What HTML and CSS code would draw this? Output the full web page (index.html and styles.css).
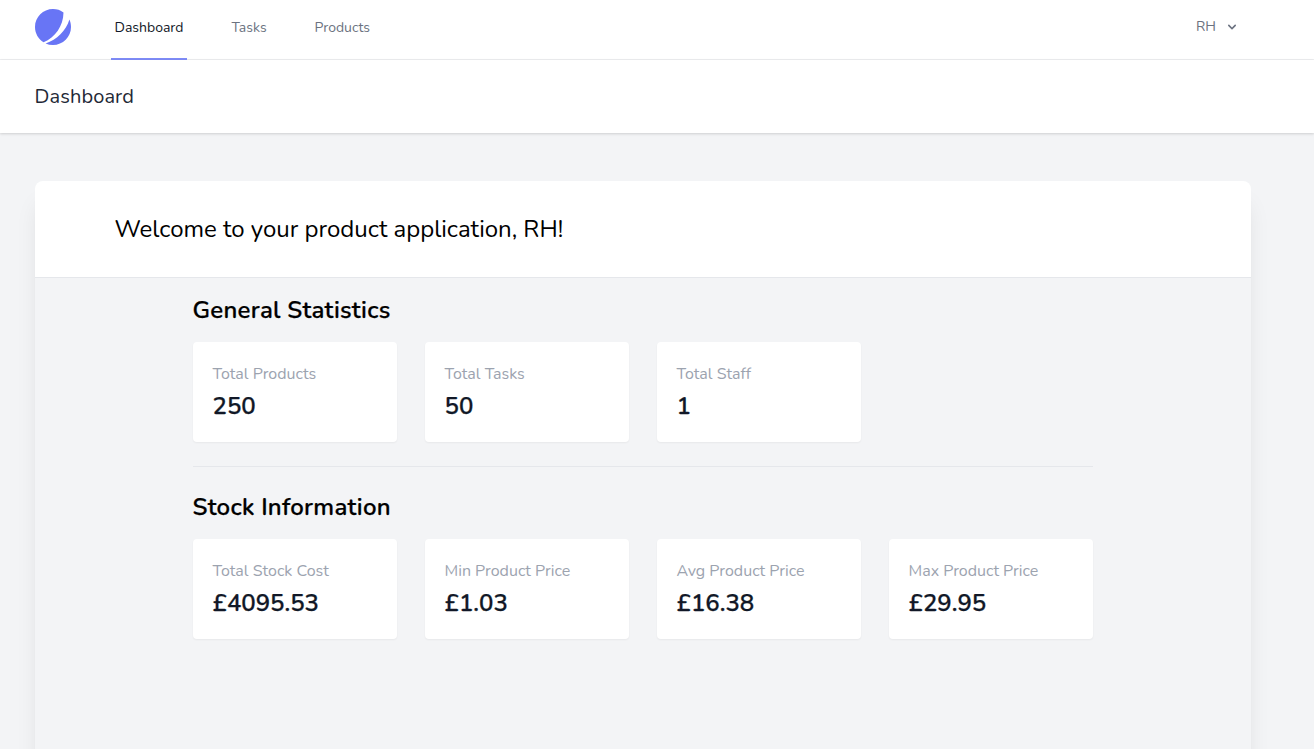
FILE: index.html
```html
<!DOCTYPE html>
<html lang="en">
<head>
<meta charset="utf-8">
<title>Dashboard</title>
<link rel="stylesheet" href="styles.css">
</head>
<body>
<nav class="nav">
  <svg class="logo" viewBox="0 0 48 48" fill="#6875f5" aria-hidden="true">
    <path d="M11.395 44.428C4.557 40.198 0 32.632 0 24 0 10.745 10.745 0 24 0a23.891 23.891 0 0113.997 4.502c-.2 17.907-11.097 33.245-26.602 39.926z"/>
    <path d="M14.134 45.885A23.914 23.914 0 0024 48c13.255 0 24-10.745 24-24 0-3.516-.756-6.856-2.115-9.866-4.659 15.143-16.608 27.092-31.75 31.751z"/>
  </svg>
  <div class="links">
    <a class="link active">Dashboard</a>
    <a class="link tasks">Tasks</a>
    <a class="link products">Products</a>
  </div>
  <div class="user"><span>RH</span>
    <svg class="chevron" viewBox="0 0 20 20" fill="#6b7280"><path fill-rule="evenodd" clip-rule="evenodd" d="M5.293 7.293a1 1 0 011.414 0L10 10.586l3.293-3.293a1 1 0 111.414 1.414l-4 4a1 1 0 01-1.414 0l-4-4a1 1 0 010-1.414z"/></svg>
  </div>
</nav>
<header class="header"><h1 class="title">Dashboard</h1></header>
<main class="main">
  <div class="panel">
    <div class="welcome"><span>Welcome to your product application, RH!</span></div>
    <div class="stats">
      <h2 class="heading">General Statistics</h2>
      <div class="cards">
        <div class="card"><div class="label">Total Products</div><div class="value">250</div></div>
        <div class="card"><div class="label">Total Tasks</div><div class="value">50</div></div>
        <div class="card"><div class="label">Total Staff</div><div class="value">1</div></div>
      </div>
      <div class="divider"></div>
      <h2 class="heading">Stock Information</h2>
      <div class="cards">
        <div class="card"><div class="label">Total Stock Cost</div><div class="value">£4095.53</div></div>
        <div class="card"><div class="label">Min Product Price</div><div class="value">£1.03</div></div>
        <div class="card"><div class="label">Avg Product Price</div><div class="value">£16.38</div></div>
        <div class="card"><div class="label">Max Product Price</div><div class="value">£29.95</div></div>
      </div>
    </div>
  </div>
</main>
</body>
</html>
```

FILE: styles.css
```css
* { box-sizing: border-box; }
body {
  margin: 0;
  height: 100vh;
  overflow: hidden;
  display: flex;
  flex-direction: column;
  background: #f3f4f6;
  color: #000;
  font-family: Nunito, Lato, sans-serif;
  white-space: nowrap;
}
h1, h2 { margin: 0; }
.nav {
  display: flex;
  flex: none;
  height: 60px;
  padding: 0 74px 0 35px;
  background: #fff;
  border-bottom: 1px solid #edeef0;
}
.logo { width: 36px; height: 36px; margin-top: 9px; }
.links { display: flex; height: 60px; margin-left: 40px; }
.link {
  padding: 18px 4px 0 3.5px;
  font-size: 14px;
  line-height: 20px;
  color: #6b7280;
  border-bottom: 2px solid transparent;
}
.active { width: 76px; color: #111827; border-color: #7f8cf7; }
.tasks { width: 43px; margin-left: 41px; }
.products { margin-left: 40px; }
.user {
  display: flex;
  align-items: center;
  gap: 8px;
  height: 20px;
  margin: 17px 0 0 auto;
  font-size: 14px;
  line-height: 20px;
  color: #6b7280;
}
.chevron { width: 16px; height: 16px; }
.header {
  flex: none;
  position: relative;
  z-index: 1;
  height: 73px;
  padding: 24px 35px;
  background: #fff;
  box-shadow: 0 1px 3px rgba(0, 0, 0, 0.1), 0 1px 2px rgba(0, 0, 0, 0.06);
}
.title { margin-left: -0.4px; font-size: 20px; font-weight: 400; line-height: 25px; color: #1f2937; letter-spacing: 0.1px; }
.main { flex: 1; min-height: 0; overflow: hidden; padding: 48px 63px 0 35px; }
.panel {
  height: 700px;
  border-radius: 8px;
  background: #f3f4f6;
  box-shadow: 0 20px 25px -5px rgba(0, 0, 0, 0.1), 0 10px 10px -5px rgba(0, 0, 0, 0.04);
}
.welcome {
  height: 97px;
  padding: 32px 80px 32px 79.5px;
  font-size: 24px;
  line-height: 32px;
  background: #fff;
  border-bottom: 1px solid #e5e7eb;
  border-radius: 8px 8px 0 0;
}
.stats { width: 900px; margin-left: 158px; padding-top: 16px; }
.heading {
  margin-left: -0.5px;
  font-size: 24px;
  font-weight: 600;
  line-height: 32px;
  letter-spacing: 0.28px;
  -webkit-text-stroke: 0.25px currentColor;
}
.cards { display: grid; grid-template-columns: repeat(4, 204px); gap: 28px; margin-top: 16px; }
.card {
  height: 100px;
  padding: 20px 20px 20px 19.5px;
  background: #fff;
  border-radius: 4px;
  box-shadow: 0 1px 2px rgba(0, 0, 0, 0.05);
}
.label { font-size: 16px; line-height: 24px; color: #9ca3af; }
.value {
  margin-top: 4px;
  font-size: 24px;
  font-weight: 600;
  line-height: 32px;
  color: #111827;
  -webkit-text-stroke: 0.25px currentColor;
}
.divider { margin: 24px 0; border-top: 1px solid #e5e7eb; }
```
